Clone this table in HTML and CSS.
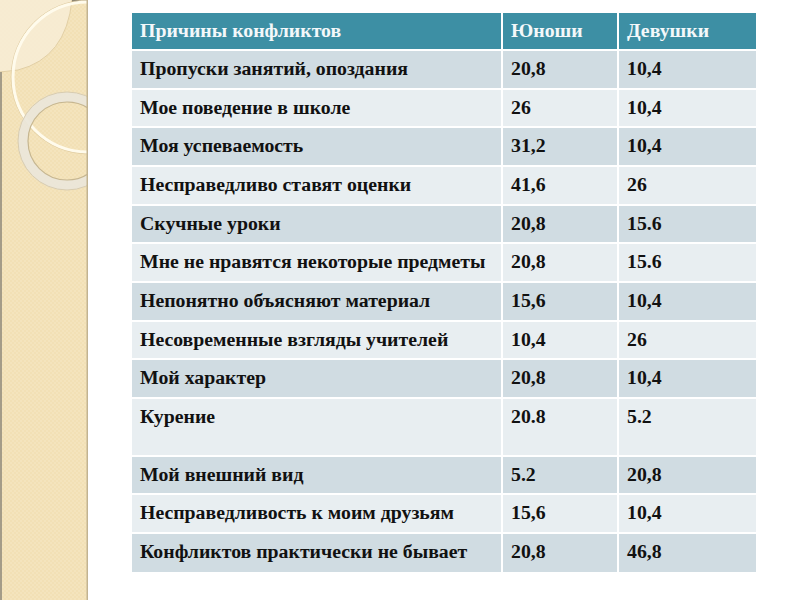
FILE: index.html
```html
<!DOCTYPE html>
<html lang="ru">
<head>
<meta charset="utf-8">
<title>Причины конфликтов</title>
<link rel="stylesheet" href="styles.css">
</head>
<body>
<div class="slide">
  <aside class="deco">
    <svg class="deco-svg" width="88" height="600" viewBox="0 0 88 600" xmlns="http://www.w3.org/2000/svg">
      <path d="M0,0 L72,0 Q66,58 18,70 L0,72 Z" fill="#f7ecd4" opacity="0.9"/>
      <path d="M72,0 Q66,58 18,70 L0,72" fill="none" stroke="#e2cfa4" stroke-width="1"/>
      <rect x="72" y="0" width="16" height="2" fill="#8c8472"/>
      <rect x="0" y="72" width="2" height="528" fill="#a49c88"/>
      <circle cx="88" cy="77" r="76.8" fill="none" stroke="#dcc89c" stroke-width="0.8"/>
      <circle cx="88" cy="77" r="75" fill="none" stroke="#fffbec" stroke-width="3"/>
      <circle cx="67" cy="141" r="44" fill="none" stroke="#ebe6d9" stroke-width="10" opacity="0.93"/>
      <circle cx="67" cy="141" r="49" fill="none" stroke="#d8ccb0" stroke-width="1"/>
      <circle cx="67" cy="141" r="39" fill="none" stroke="#c6b690" stroke-width="1.2"/>
      <rect x="86.5" y="0" width="1.5" height="600" fill="#c2b391"/>
    </svg>
  </aside>
  <main class="content">
    <table class="data">
      <thead>
        <tr class="head">
          <th class="c1">Причины конфликтов</th>
          <th class="c2">Юноши</th>
          <th class="c3">Девушки</th>
        </tr>
      </thead>
      <tbody>
        <tr class="dark"><td>Пропуски занятий, опоздания</td><td>20,8</td><td>10,4</td></tr>
        <tr class="light"><td>Мое поведение в школе</td><td>26</td><td>10,4</td></tr>
        <tr class="dark"><td>Моя успеваемость</td><td>31,2</td><td>10,4</td></tr>
        <tr class="light"><td>Несправедливо ставят оценки</td><td>41,6</td><td>26</td></tr>
        <tr class="dark"><td>Скучные уроки</td><td>20,8</td><td>15.6</td></tr>
        <tr class="light"><td>Мне не нравятся некоторые предметы</td><td>20,8</td><td>15.6</td></tr>
        <tr class="dark"><td>Непонятно объясняют материал</td><td>15,6</td><td>10,4</td></tr>
        <tr class="light"><td>Несовременные взгляды учителей</td><td>10,4</td><td>26</td></tr>
        <tr class="dark"><td>Мой характер</td><td>20,8</td><td>10,4</td></tr>
        <tr class="light tall"><td>Курение</td><td>20.8</td><td>5.2</td></tr>
        <tr class="dark r36"><td>Мой внешний вид</td><td>5.2</td><td>20,8</td></tr>
        <tr class="light r37"><td>Несправедливость к моим друзьям</td><td>15,6</td><td>10,4</td></tr>
        <tr class="dark r38"><td>Конфликтов практически не бывает</td><td>20,8</td><td>46,8</td></tr>
      </tbody>
    </table>
  </main>
</div>
</body>
</html>
```

FILE: styles.css
```css
html, body {
  margin: 0;
  padding: 0;
  background: #ffffff;
}

.slide {
  width: 800px;
  height: 600px;
  display: flex;
  overflow: hidden;
}

.deco {
  width: 88px;
  height: 600px;
  flex: 0 0 88px;
  background-color: #f3e2b9;
  background-image: repeating-conic-gradient(#f2e0b5 0 25%, #f4e4bd 0 50%);
  background-size: 4px 4px;
}

.deco-svg {
  display: block;
}

.content {
  flex: 1;
  padding: 11px 0 0 42px;
}

.data {
  border-collapse: separate;
  border-spacing: 2px;
  table-layout: fixed;
  font-family: "Liberation Serif", "Times New Roman", serif;
  font-size: 19.8px;
  font-weight: bold;
  line-height: 22px;
  color: #111111;
}

.data th,
.data td {
  box-sizing: border-box;
  padding: 6px 4px 0 8px;
  vertical-align: top;
  text-align: left;
  white-space: nowrap;
}

.c1 { width: 369px; }
.c2 { width: 114px; }
.c3 { width: 137px; }

.head th {
  background: #3d8fa4;
  color: #f4f8fa;
  height: 36px;
}

.dark td { background: #d0dce2; }
.light td { background: #e8eef1; }

tbody tr td { height: 36.67px; }
tbody tr.tall td { height: 56px; }
tbody tr.r36 td { height: 36px; }
tbody tr.r37 td { height: 37px; }
tbody tr.r38 td { height: 38px; }
```
